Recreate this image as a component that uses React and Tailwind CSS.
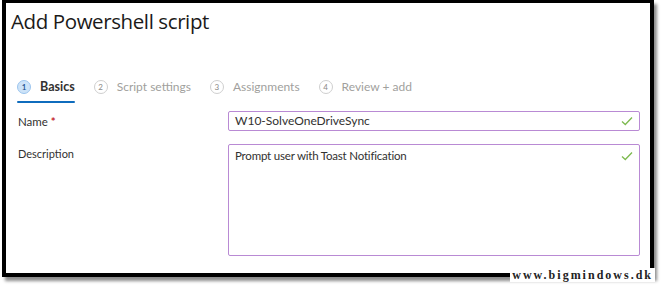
import React from 'react';

const steps = [
  { n: 1, label: 'Basics', active: true },
  { n: 2, label: 'Script settings' },
  { n: 3, label: 'Assignments' },
  { n: 4, label: 'Review + add' },
];

const Check = () => (
  <svg width="12" height="10" viewBox="0 0 12 10" className="shrink-0">
    <path d="M1 5.5 L4.3 8.5 L11 1.5" fill="none" stroke="#7dba4f" strokeWidth="1.3" />
  </svg>
);

export default function App() {
  return (
    <div className="w-[661px] h-[286px] bg-white relative overflow-hidden font-['Lato',sans-serif]">
      <div className="ml-[2px] w-[652px] h-[277px] border-[4px] border-t-[3px] border-black bg-white shadow-[3px_4px_3px_rgba(0,0,0,0.45)] flex flex-col">
        <h1 className="ml-[5px] mt-[4px] text-[20.5px] leading-[28px] text-[#1b1a19] font-['Open_Sans',sans-serif] tracking-[-0.4px]">
          Add Powershell script
        </h1>

        <div className="ml-[11px] mt-[43px] flex items-start gap-[19px]">
          {steps.map((s) => (
            <div key={s.n} className="flex flex-col">
              <div className="flex items-center gap-[9px] h-[18px]">
                <span
                  className={
                    s.active
                      ? 'w-[14px] h-[14px] rounded-full bg-[#cde3f8] border border-[#9cc5ee] text-[8px] leading-none text-[#1b4f8a] flex items-center justify-center font-semibold'
                      : 'w-[14px] h-[14px] rounded-full bg-white border border-[#cfcfcf] text-[8px] leading-none text-[#8a8886] flex items-center justify-center'
                  }
                >
                  {s.n}
                </span>
                <span
                  className={
                    s.active
                      ? 'text-[12.5px] font-bold text-[#323130]'
                      : 'text-[12px] text-[#a19f9d]'
                  }
                >
                  {s.label}
                </span>
              </div>
              <div className={s.active ? 'mt-[5px] h-[2px] bg-[#0f6cbd] rounded-sm' : 'mt-[5px] h-[2px]'} />
            </div>
          ))}
        </div>

        <div className="ml-[12px] mt-[8px] grid grid-cols-[210px_412px] gap-y-[13px] text-[12px] text-[#323130]">
          <div className="pt-[2px] text-[11.5px]">
            Name <span className="text-[#c4262c] font-bold">*</span>
          </div>
          <div className="h-[20px] border border-[#b98ad4] rounded-[2px] flex items-center justify-between px-[6px]">
            <span className="text-[12px]">W10-SolveOneDriveSync</span>
            <Check />
          </div>
          <div className="pt-[2px] text-[11px]">Description</div>
          <div className="h-[112px] border border-[#b98ad4] rounded-[2px] flex items-start justify-between px-[6px] pt-[2px]">
            <span className="text-[11.5px] tracking-[-0.2px]">Prompt user with Toast Notification</span>
            <span className="pt-[4px]">
              <Check />
            </span>
          </div>
        </div>
      </div>
      <div className="absolute right-[6px] bottom-[4px] text-[12px] leading-[14px] font-bold font-['Liberation_Serif',serif] text-[#222] tracking-[2px] bg-white px-[2px]">
        www.bigmindows.dk
      </div>
    </div>
  );
}
